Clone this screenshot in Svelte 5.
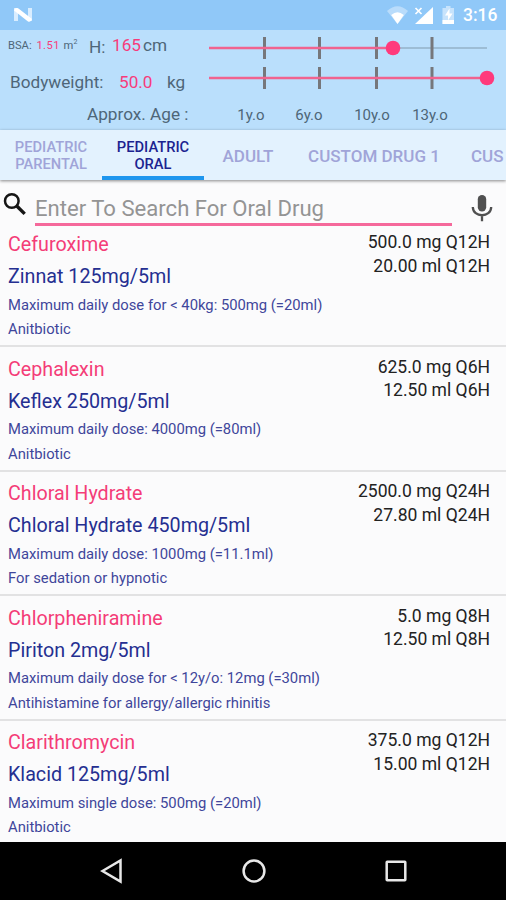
<script>
  const drugs = [
    { name: 'Cefuroxime', brand: 'Zinnat 125mg/5ml', max: 'Maximum daily dose for < 40kg: 500mg (=20ml)', note: 'Anitbiotic', dose: '500.0 mg Q12H', volume: '20.00 ml Q12H' },
    { name: 'Cephalexin', brand: 'Keflex 250mg/5ml', max: 'Maximum daily dose: 4000mg (=80ml)', note: 'Anitbiotic', dose: '625.0 mg Q6H', volume: '12.50 ml Q6H' },
    { name: 'Chloral Hydrate', brand: 'Chloral Hydrate 450mg/5ml', max: 'Maximum daily dose: 1000mg (=11.1ml)', note: 'For sedation or hypnotic', dose: '2500.0 mg Q24H', volume: '27.80 ml Q24H' },
    { name: 'Chlorpheniramine', brand: 'Piriton 2mg/5ml', max: 'Maximum daily dose for < 12y/o: 12mg (=30ml)', note: 'Antihistamine for allergy/allergic rhinitis', dose: '5.0 mg Q8H', volume: '12.50 ml Q8H' },
    { name: 'Clarithromycin', brand: 'Klacid 125mg/5ml', max: 'Maximum single dose: 500mg (=20ml)', note: 'Anitbiotic', dose: '375.0 mg Q12H', volume: '15.00 ml Q12H' }
  ];
  const sliders = [184, 278];
  const ticks = [55, 110, 167, 222.5];
</script>

<div class="screen">
  <div class="status">
    <svg class="logo" width="20" height="16" viewBox="0 0 20 16">
      <path d="M1 1h4v13H1zM15 1h4v13h-4z" fill="#d9edff" />
      <path d="M1 3.500Q2 0 5.500 1.500L19 12Q18 15.500 15 14.500z" fill="#fff" />
    </svg>
    <svg width="76" height="30" viewBox="0 0 76 30" class="tray">
      <path d="M0 11Q10.500 1.500 21 11L10.500 24z" fill="#b9dcfb" />
      <path d="M4.200 15Q10.500 9.500 16.800 15L10.500 24z" fill="#fff" />
      <path d="M28 24L46 7v17z" fill="#fff" />
      <path d="M28.500 8l6 6m0-6l-6 6" stroke="#fff" stroke-width="1.700" />
      <path d="M55.500 8h3.500V6h4.500v2H67v16H55.500z" fill="#c7e3fc" />
      <path d="M55.500 20H67v4H55.500z" fill="#fff" />
      <path d="M62.500 8.500l-4.500 7h3v5l4.500-7h-3z" fill="#fff" />
    </svg>
    <span class="clock">3:16</span>
  </div>

  <header>
    <div class="controls">
      <div class="readings">
        <div class="reading top">
          <span class="bsa">BSA: <b>1.51</b> m<sup>2</sup></span>
          <span class="h">H:</span><b class="height">165</b><span class="cm">cm</span>
        </div>
        <div class="reading weight">
          <span class="label">Bodyweight:</span><b>50.0</b><span class="kg">kg</span>
        </div>
      </div>
      <div class="sliders">
        {#each sliders as value}
          <svg width="296" height="30" viewBox="0 0 296 30">
            <path d="M0 15H278" stroke="#9dbdd5" stroke-width="2" />
            {#each ticks as x}
              <path d="M{x + 0.5} 4V26" stroke="#76777b" stroke-width="3" />
            {/each}
            <path d="M0 15H{value}" stroke="#f0638f" stroke-width="2.600" />
            <circle cx={value} cy="15" r="7.300" fill="#ff3a7c" />
          </svg>
        {/each}
      </div>
    </div>
    <div class="ages">
      <span class="approx">Approx. Age :</span>
      <span class="age">1y.o</span><span class="age">6y.o</span><span class="age">10y.o</span><span class="age">13y.o</span>
    </div>
  </header>

  <nav>
    <div class="tab two">PEDIATRIC<br />PARENTAL</div>
    <div class="tab two active">PEDIATRIC<br />ORAL</div>
    <div class="tab adult">ADULT</div>
    <div class="tab custom">CUSTOM DRUG 1</div>
    <div class="tab last">CUS</div>
  </nav>

  <div class="search">
    <svg class="lens" width="25" height="25" viewBox="0 0 25 25">
      <circle cx="8.800" cy="9" r="6.800" fill="none" stroke="#151515" stroke-width="2.500" />
      <path d="M13.800 14L21.700 21.900" stroke="#151515" stroke-width="3.400" />
    </svg>
    <div class="field">Enter To Search For Oral Drug</div>
    <svg class="mic" width="22" height="29" viewBox="0 0 22 29">
      <rect x="6.800" y="1" width="8.400" height="16.500" rx="4.200" fill="#505050" />
      <path d="M1.800 13C2 24 20 24 20.200 13M11 21V27.300" fill="none" stroke="#505050" stroke-width="2.300" />
    </svg>
  </div>

  <main>
    {#each drugs as drug}
      <article>
        <div class="info">
          <div class="name">{drug.name}</div>
          <div class="brand">{drug.brand}</div>
          <div class="small">{drug.max}</div>
          <div class="small">{drug.note}</div>
        </div>
        <div class="dose">
          <div>{drug.dose}</div>
          <div>{drug.volume}</div>
        </div>
      </article>
    {/each}
  </main>

  <footer>
    <svg width="26" height="26" viewBox="0 0 26 26"><path d="M3.500 13L21.500 2.500v21z" /></svg>
    <svg width="26" height="26" viewBox="0 0 26 26"><circle cx="13" cy="13" r="10.400" /></svg>
    <svg width="26" height="26" viewBox="0 0 26 26"><rect x="3.700" y="3.700" width="18.600" height="18.600" rx="0.500" /></svg>
  </footer>
</div>

<style>
  :global(body) { margin: 0; }
  .screen {
    width: 506px; height: 900px; overflow: hidden; display: flex; flex-direction: column;
    background: #fbfbfc; font-family: Roboto, "Liberation Sans", sans-serif; white-space: nowrap;
  }
  svg { display: block; flex: none; }
  b { font-weight: 400; color: #f73b7b; }
  .status { height: 30px; flex: none; background: #90c8f8; display: flex; align-items: center; }
  .logo { margin-left: 13px; }
  .tray { margin-left: 354px; }
  .clock { color: #fff; font-size: 17.5px; font-weight: 500; line-height: 32px; }

  header { height: 100px; flex: none; background: #badffc; color: #4e6678; }
  .controls { display: flex; height: 67px; }
  .readings { width: 209px; flex: none; }
  .reading { display: flex; align-items: baseline; }
  .top { height: 34px; padding-left: 8px; line-height: 32px; }
  .bsa { font-size: 11.2px; width: 81px; position: relative; top: -3px; }
  .bsa b { letter-spacing: .4px; margin: 0 1px 0 2px; }
  .bsa sup { font-size: 7px; line-height: 0; }
  .h { font-size: 17.2px; width: 23px; position: relative; top: 1px; }
  .height { font-size: 17.2px; width: 31px; position: relative; top: -1px; }
  .cm { font-size: 17.2px; position: relative; top: -1px; }
  .weight { font-size: 17.2px; padding-left: 10px; line-height: 36px; }
  .weight .label { width: 109px; }
  .weight b { width: 48px; }
  .sliders { padding-top: 3px; }
  .ages { display: flex; align-items: baseline; line-height: 35px; font-size: 15px; }
  .approx { font-size: 17.2px; width: 124px; margin-left: 87px; }
  .age { width: 80px; text-align: center; margin-right: -22px; }
  .age:nth-of-type(4) { margin-left: 5px; }

  nav {
    height: 50px; flex: none; background: #e3f2fe; display: flex; align-items: center; position: relative;
    color: #a0a4d8; font-size: 17px; font-weight: 500; box-shadow: 0 1px 3px #0007;
  }
  .tab { box-sizing: border-box; height: 50px; line-height: 53px; text-align: center; flex: none; }
  .two { width: 102px; padding-top: 9px; font-size: 14.7px; line-height: 17px; }
  .active { color: #1b2390; border-bottom: 4px solid #1e96ee; }
  .adult { width: 88px; }
  .custom { width: 164px; }
  .last { padding-left: 15px; width: 50px; text-align: left; }

  .search { height: 48px; flex: none; display: flex; }
  .lens { margin: 12px 0 0 3px; }
  .field {
    width: 417px; height: 46px; box-sizing: border-box; margin-left: 7px; border-bottom: 3px solid #f5699b;
    color: #949494; font-size: 22.1px; line-height: 56px;
  }
  .mic { margin: 14px 0 0 19px; }

  main { height: 614px; flex: none; overflow: hidden; }
  article {
    height: 124.5px; box-sizing: border-box; padding: 6.8px 16px 0 8px; border-bottom: 2px solid #e2e2e3;
    display: flex; justify-content: space-between;
  }
  article:first-child { height: 119px; padding-top: 1.3px; }
  .name, .brand { font-size: 19.7px; line-height: 32px; }
  .name { color: #f43d78; }
  .brand { color: #252f91; line-height: 31.5px; }
  .small { color: #3f469b; font-size: 14.8px; line-height: 24.5px; }
  .dose { color: #222; font-size: 17.55px; line-height: 23.3px; text-align: right; padding-top: 2px; }

  footer {
    flex: 1; background: #000; display: flex; align-items: center; justify-content: center; gap: 116px; padding-left: 2px;
  }
  footer svg { fill: none; stroke: #e8e8e8; stroke-width: 2.5; }
</style>
